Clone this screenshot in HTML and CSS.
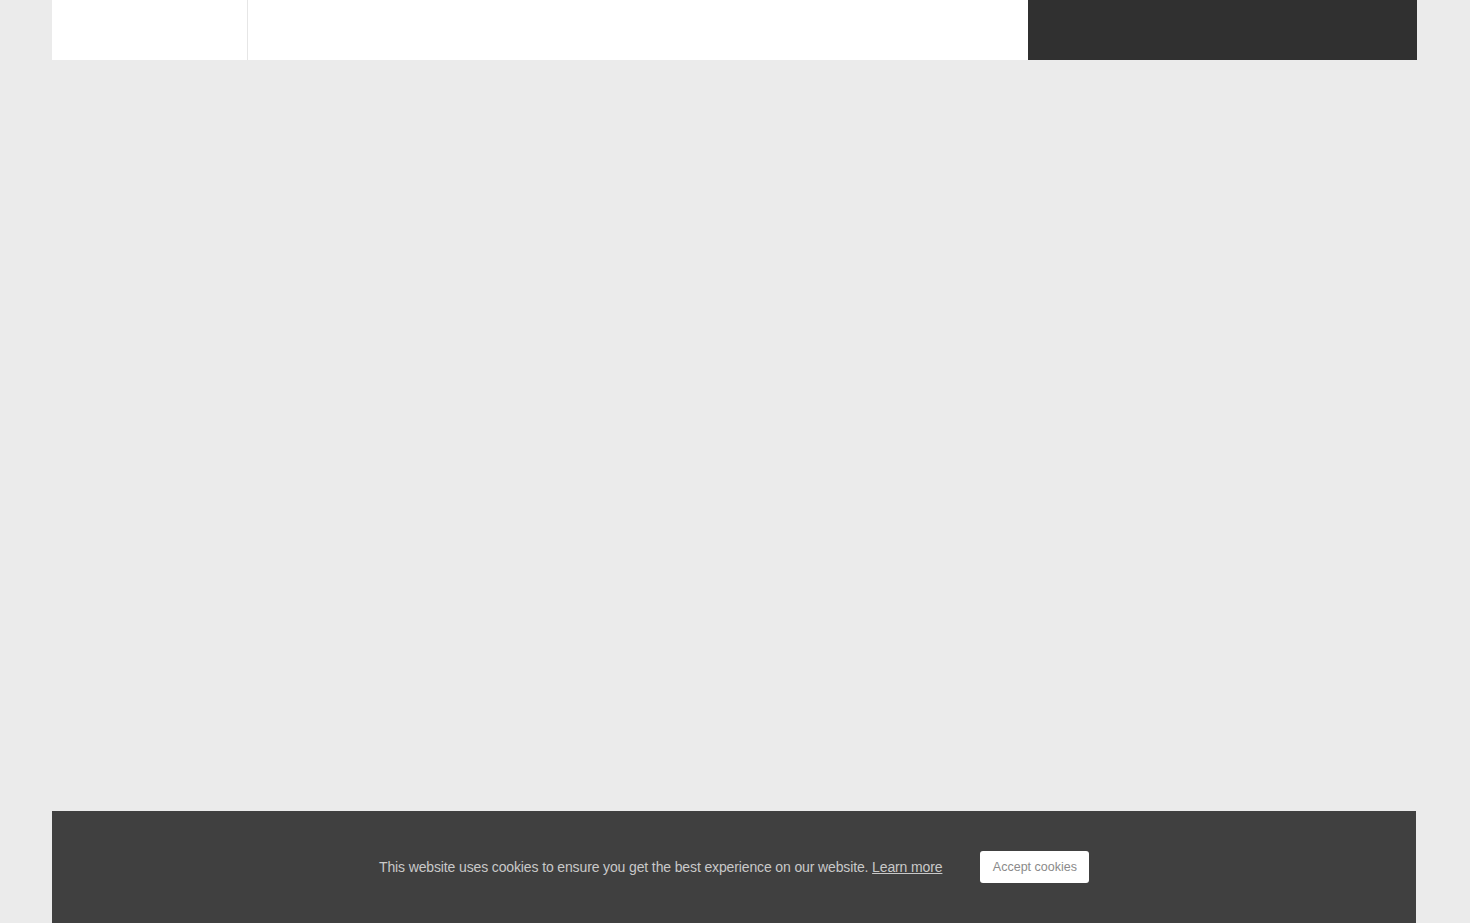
FILE: index.html
```html
<!DOCTYPE html>
<html lang="en">
<head>
    <meta charset="UTF-8">
    <meta name="viewport" content="width=device-width, initial-scale=1.0">
    <title>Home</title>
    <link rel="stylesheet" href="styles.css">
</head>
<body>

    <header class="site-header">
        <div class="header-logo"></div>
        <div class="header-nav"></div>
        <div class="header-side"></div>
    </header>

    <main class="content"></main>

    <!-- Cookie notice -->
    <div class="cookie-bar">
        <div class="cookie-inner">
            <p class="cookie-text">This website uses cookies to ensure you get the best experience on our website. <a href="#">Learn more</a></p>
            <button class="cookie-btn" type="button">Accept cookies</button>
        </div>
    </div>

</body>
</html>
```

FILE: styles.css
```css
body {
    margin: 0;
    background: #ebebeb;
    font-family: 'Liberation Sans', Arial, sans-serif;
    height: 923px;
    overflow: hidden;
}

.site-header {
    display: flex;
    height: 60px;
    margin: 0 53px 0 52px;
}

.header-logo {
    width: 195px;
    background: #fff;
    border-right: 1px solid #e6e6e6;
}

.header-nav {
    flex: 1;
    background: #fff;
}

.header-side {
    width: 389px;
    background: #303030;
}

.content {
    height: 751px;
}

.cookie-bar {
    margin: 0 54px 0 52px;
    height: 140px;
    background: #404040;
}

.cookie-inner {
    display: flex;
    align-items: center;
    padding-top: 40px;
    padding-left: 327px;
}

.cookie-text {
    margin: 0;
    color: #c9c9c9;
    font-size: 14px;
    letter-spacing: -0.13px;
}

.cookie-text a {
    color: #c9c9c9;
}

.cookie-btn {
    margin-left: 38px;
    width: 109px;
    height: 32px;
    background: #fff;
    border: none;
    border-radius: 3px;
    color: #8a8a8a;
    font-family: inherit;
    font-size: 12.5px;
    cursor: pointer;
}
```
